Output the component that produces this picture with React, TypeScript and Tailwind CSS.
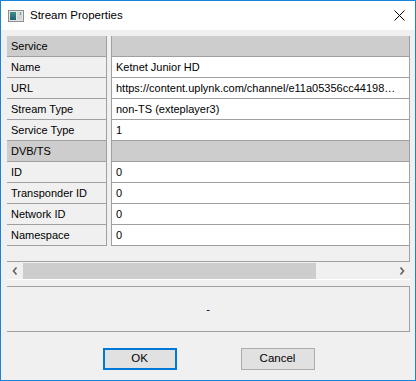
import React from 'react'

const rows: { label: string; value: string; header?: boolean }[] = [
  { label: 'Service', value: '', header: true },
  { label: 'Name', value: 'Ketnet Junior HD' },
  { label: 'URL', value: 'https://content.uplynk.com/channel/e11a05356cc44198…' },
  { label: 'Stream Type', value: 'non-TS (exteplayer3)' },
  { label: 'Service Type', value: '1' },
  { label: 'DVB/TS', value: '', header: true },
  { label: 'ID', value: '0' },
  { label: 'Transponder ID', value: '0' },
  { label: 'Network ID', value: '0' },
  { label: 'Namespace', value: '0' },
]

const AppIcon = () => (
  <svg width="16" height="12" viewBox="0 0 16 12" className="shrink-0">
    <defs>
      <linearGradient id="g" x1="0" y1="0" x2="0" y2="1">
        <stop offset="0" stopColor="#3f8f86" />
        <stop offset="1" stopColor="#1f5f74" />
      </linearGradient>
    </defs>
    <rect x="0.5" y="0.5" width="15" height="11" fill="#e8e8e8" stroke="#8c8c8c" />
    <rect x="2" y="2" width="6" height="8" fill="url(#g)" />
    <rect x="9" y="2" width="5" height="8" fill="#d4d4d4" />
    <rect x="12" y="2" width="1" height="3" fill="#5aa88f" />
  </svg>
)

const Chevron = ({ dir }: { dir: 'left' | 'right' }) => (
  <svg width="6" height="8" viewBox="0 0 6 8">
    <polyline
      points={dir === 'left' ? '4.5,0.5 1.5,4 4.5,7.5' : '1.5,0.5 4.5,4 1.5,7.5'}
      fill="none"
      stroke="#606060"
      strokeWidth="1.6"
    />
  </svg>
)

export default function App() {
  return (
    <div className="w-[416px] h-[381px] border border-[#1883d7] bg-[#f0f0f0] flex flex-col font-['Liberation_Sans',Arial,sans-serif] text-[11px] text-black">
      {/* title bar */}
      <div className="h-[29px] bg-white flex items-center pl-[7px] shrink-0">
        <AppIcon />
        <span className="ml-[6px] text-[11.5px]">Stream Properties</span>
        <svg width="11" height="11" viewBox="0 0 11 11" className="ml-auto mr-[10px]">
          <path d="M0.5 0.5 L10.5 10.5 M10.5 0.5 L0.5 10.5" stroke="#000" strokeWidth="1" />
        </svg>
      </div>

      <div className="flex flex-col pl-[6px] pr-[5px]">
        {/* property tree */}
        <div className="mt-[6px] flex flex-col">
          {rows.map((r) => (
            <div key={r.label} className="flex h-[21px]">
              <div
                className={`w-[100px] border-r border-b border-[#a0a0a0] pl-[4px] flex items-center ${
                  r.header ? 'bg-[#cdcdcd]' : 'bg-[#f0f0f0]'
                }`}
              >
                {r.label}
              </div>
              <div className="w-[5px] border-r border-[#a0a0a0]" />
              <div
                className={`flex-1 border-r border-b border-[#a0a0a0] pl-[4px] flex items-center whitespace-nowrap overflow-hidden ${
                  r.header ? 'bg-[#cdcdcd]' : 'bg-white'
                }`}
              >
                {r.value}
              </div>
            </div>
          ))}
          <div className="h-[16px] border-r border-b border-[#a0a0a0]" />
          <div className="h-[17px] flex items-stretch border-b border-white mt-[1px]">
            <div className="w-[16px] flex items-center justify-center">
              <Chevron dir="left" />
            </div>
            <div className="w-[293px] bg-[#cdcdcd]" />
            <div className="flex-1" />
            <div className="w-[16px] flex items-center justify-center">
              <Chevron dir="right" />
            </div>
          </div>
        </div>

        {/* status panel */}
        <div className="mt-[6px] h-[46px] border-t border-r border-b border-[#a0a0a0] flex items-center justify-center">
          -
        </div>
      </div>

      {/* buttons */}
      <div className="mt-[16px] flex justify-center gap-[64px] pl-[1px]">
        <button className="w-[74px] h-[22px] bg-[#e1e1e1] border-2 border-[#0078d7] text-[11.5px]">OK</button>
        <button className="w-[74px] h-[22px] bg-[#e1e1e1] border border-[#adadad] text-[11.5px]">Cancel</button>
      </div>
    </div>
  )
}
